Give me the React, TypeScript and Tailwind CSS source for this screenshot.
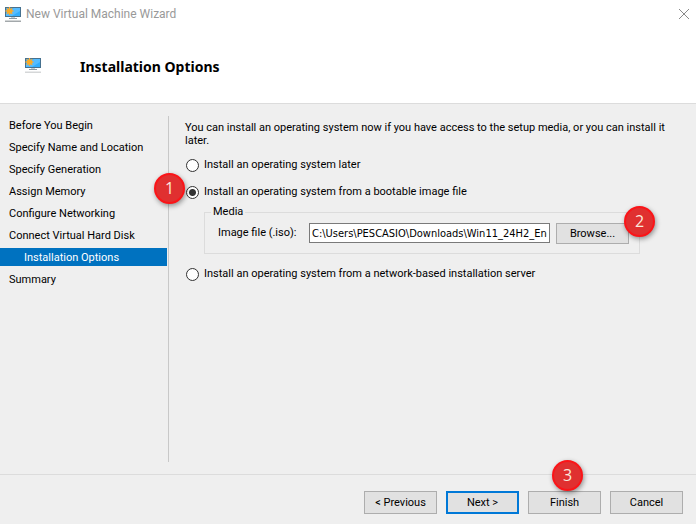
import { FC, ReactNode, useState } from "react";

const steps = [
    "Before You Begin",
    "Specify Name and Location",
    "Specify Generation",
    "Assign Memory",
    "Configure Networking",
    "Connect Virtual Hard Disk",
    "Installation Options",
    "Summary",
];

interface MonitorIconProps {
    baseColor: string;
}

const MonitorIcon: FC<MonitorIconProps> = ({ baseColor }) => (
    <svg width="16" height="15" viewBox="0 0 16 15" aria-hidden="true">
        <rect x="0.5" y="0.5" width="15" height="9" fill="#33adfb" stroke="#46718f" />
        <path d="M1 9V6L9 1h6v3L7 9z" fill="#55bcff" />
        <path d="M6 10h4v1H6z" fill="#c3ced6" />
        <path d="M4 11h8v1H4z" fill="#8d9aa3" />
        <path d="M0 13.5h16V15H0z" fill={baseColor} />
        <path
            d="M4.5 0v8M0.5 4h8M1.7 1.2l5.6 5.6M7.3 1.2L1.7 6.8"
            stroke="#f2a93c"
            strokeWidth="1.3"
        />
        <circle cx="4.5" cy="4" r="2.6" fill="#fbab25" />
    </svg>
);

interface BadgeProps {
    children: ReactNode;
    className: string;
}

const Badge: FC<BadgeProps> = ({ children, className }) => (
    <span
        className={`absolute z-10 flex h-[31px] w-[31px] items-center justify-center rounded-full border-2 border-[#fb1418] bg-[#e03030] pb-px font-['Open_Sans',sans-serif] text-[16px] leading-none text-[#fbe9dc] shadow-[1px_2px_5px_rgba(0,0,0,0.4)] ${className}`}
    >
        {children}
    </span>
);

interface OptionProps {
    label: string;
    value: string;
    selected: string;
    onSelect: (value: string) => void;
}

const Option: FC<OptionProps> = ({ label, value, selected, onSelect }) => (
    <label className="flex h-4 items-center gap-[5px]">
        <input
            type="radio"
            name="install"
            value={value}
            checked={selected === value}
            onChange={() => onSelect(value)}
            className="h-[13px] w-[13px] shrink-0 appearance-none rounded-full border border-[#333] bg-white bg-clip-padding checked:bg-[radial-gradient(circle,#333_0_3px,#fff_4px)]"
        />
        <span className="pt-px">{label}</span>
    </label>
);

interface WizardButtonProps {
    children: ReactNode;
    primary?: boolean;
}

const WizardButton: FC<WizardButtonProps> = ({ children, primary }) => (
    <button
        type="button"
        className={`h-[23px] w-[73px] bg-[#e1e1e1] pt-px ${
            primary ? "border-2 border-[#0078d7]" : "border border-[#adadad]"
        }`}
    >
        {children}
    </button>
);

const Header: FC = () => (
    <header className="border-b border-[#dcdcdc] bg-white">
        <div className="flex h-[28px] items-center justify-between pl-[5px] pr-[6px]">
            <div className="flex items-center gap-[5px]">
                <MonitorIcon baseColor="#a3a8ab" />
                <span className="text-[12px] text-[#999]">
                    New Virtual Machine Wizard
                </span>
            </div>
            <button type="button" aria-label="Close">
                <svg width="12" height="12" viewBox="0 0 12 12">
                    <path d="M1 1l10 10M11 1L1 11" stroke="#8a8a8a" />
                </svg>
            </button>
        </div>
        <div className="flex h-[77px] items-center gap-[39px] pb-[2px] pl-[25px] -mb-[2px]">
            <MonitorIcon baseColor="#d5d7d8" />
            <h1 className="pt-[2px] font-['Noto_Sans',sans-serif] text-[14px] font-bold">
                Installation Options
            </h1>
        </div>
    </header>
);

const Sidebar: FC = () => (
    <nav className="w-[169px] shrink-0 border-r border-[#c8c8c8] pr-px">
        <ul className="flex flex-col gap-1">
            {steps.map((step) => (
                <li key={step}>
                    <a
                        href="#"
                        className={`block pt-[2px] leading-4 whitespace-nowrap ${
                            step === "Installation Options"
                                ? "bg-[#0072c0] pl-6 text-white"
                                : "pl-[9px]"
                        }`}
                    >
                        {step}
                    </a>
                </li>
            ))}
        </ul>
    </nav>
);

const InstallOptions: FC = () => {
    const [selected, setSelected] = useState("image");
    const [path, setPath] = useState(
        "C:\\Users\\PESCASIO\\Downloads\\Win11_24H2_English_x64.iso"
    );

    return (
        <main className="grow pl-4 pr-6 pt-[5px]">
            <p className="leading-[13px]">
                You can install an operating system now if you have access to the
                setup media, or you can install it later.
            </p>
            <div className="mt-[10px] flex flex-col pl-px">
                <Option
                    label="Install an operating system later"
                    value="later"
                    selected={selected}
                    onSelect={setSelected}
                />
                <div className="relative mt-[11px]">
                    <Option
                        label="Install an operating system from a bootable image file"
                        value="image"
                        selected={selected}
                        onSelect={setSelected}
                    />
                    <Badge className="-left-8 -top-[11px]">1</Badge>
                </div>
                <fieldset className="relative ml-[18px] mr-8 mt-1 border border-[#dcdcdc] pb-[9px] pl-[13px] pr-[10px]">
                    <legend className="-ml-[7px] px-[2px] leading-4">Media</legend>
                    <div className="flex items-start gap-[6px] pt-[3px]">
                        <label htmlFor="iso" className="w-[85px] leading-5">
                            Image file (.iso):
                        </label>
                        <input
                            id="iso"
                            type="text"
                            value={path}
                            onChange={(e) => setPath(e.target.value)}
                            className="h-5 min-w-0 grow border border-[#7a7a7a] bg-white px-[2px] font-['DejaVu_Sans_Condensed',sans-serif]"
                        />
                        <button
                            type="button"
                            className="h-[21px] w-[73px] border border-[#adadad] bg-[#e1e1e1] pt-px"
                        >
                            Browse...
                        </button>
                    </div>
                    <Badge className="-right-4 -top-[14px]">2</Badge>
                </fieldset>
                <div className="mt-3">
                    <Option
                        label="Install an operating system from a network-based installation server"
                        value="network"
                        selected={selected}
                        onSelect={setSelected}
                    />
                </div>
            </div>
        </main>
    );
};

const Footer: FC = () => (
    <footer className="flex justify-end gap-[9px] border-t border-[#dcdcdc] pb-[10px] pr-[13px] pt-4">
        <WizardButton>&lt; Previous</WizardButton>
        <WizardButton primary>Next &gt;</WizardButton>
        <div className="relative">
            <WizardButton>Finish</WizardButton>
            <Badge className="-top-[31px] left-6">3</Badge>
        </div>
        <WizardButton>Cancel</WizardButton>
    </footer>
);

const App: FC = () => (
    <div className="flex min-h-screen flex-col bg-[#efefef] font-['Roboto','Open_Sans',sans-serif] text-[11px] text-black">
        <Header />
        <div className="flex grow pb-3 pt-3">
            <Sidebar />
            <InstallOptions />
        </div>
        <Footer />
    </div>
);

export default App;
